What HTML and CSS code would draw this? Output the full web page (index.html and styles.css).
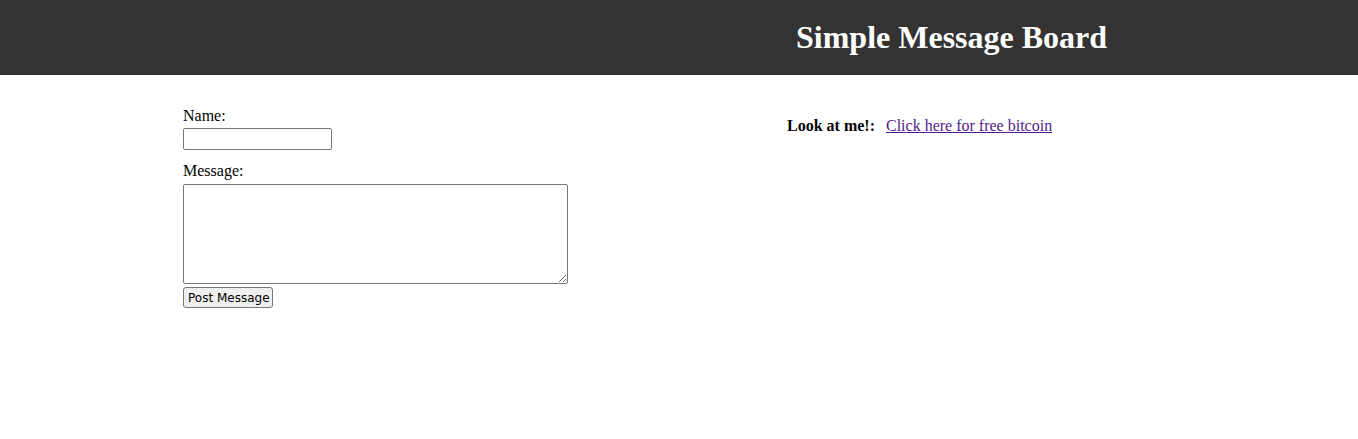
FILE: index.html
```html
<!DOCTYPE html>
<html>
<head>
<meta charset="utf-8">
<title>Simple Message Board</title>
<link rel="stylesheet" href="styles.css">
</head>
<body>
<header class="site-header">
  <h1 class="site-title">Simple Message Board</h1>
</header>
<main class="content">
  <form class="post-form">
    <label class="field-label" for="name">Name:</label>
    <input class="name-input" type="text" id="name">
    <label class="field-label message-label" for="message">Message:</label>
    <textarea class="message-input" id="message"></textarea>
    <button class="post-button" type="button">Post Message</button>
  </form>
  <aside class="promo">
    <strong class="promo-label">Look at me!:</strong>
    <a class="promo-link" href="#">Click here for free bitcoin</a>
  </aside>
</main>
</body>
</html>
```
FILE: styles.css
```css
html, body {
  margin: 0;
  padding: 0;
  background: #ffffff;
  font-family: "Liberation Serif", "Times New Roman", serif;
  font-size: 16px;
  color: #000;
}

.site-header {
  background: #333333;
  height: 75px;
  display: flex;
  align-items: center;
  padding-left: 796px;
  box-sizing: border-box;
}

.site-title {
  margin: 0;
  color: #ffffff;
  font-size: 32px;
  font-weight: bold;
  line-height: 37px;
}

.content {
  display: flex;
  padding: 32px 0 0 183px;
}

.post-form {
  width: 604px;
  display: flex;
  flex-direction: column;
  align-items: flex-start;
}

.field-label {
  display: block;
  line-height: 18px;
  margin-bottom: 3px;
}

.message-label {
  margin-top: 12px;
  margin-bottom: 4px;
}

.name-input {
  width: 149px;
  height: 22px;
  box-sizing: border-box;
  margin: 0;
  border: 1px solid #767676;
  border-radius: 2px;
  padding: 1px 2px;
  font-family: "Liberation Sans", Arial, sans-serif;
  font-size: 13.33px;
}

.message-input {
  width: 385px;
  height: 100px;
  box-sizing: border-box;
  margin: 0;
  border: 1px solid #767676;
  border-radius: 2px;
  padding: 2px;
  font-family: "Liberation Mono", monospace;
  font-size: 13.33px;
}

.post-button {
  margin-top: 3px;
  width: 90px;
  height: 21px;
  box-sizing: border-box;
  padding: 0 4px;
  background: #efefef;
  border: 1px solid #767676;
  border-radius: 3px;
  font-family: "DejaVu Sans", Tahoma, sans-serif;
  font-size: 12px;
  color: #000;
  white-space: nowrap;
}

.promo {
  padding-top: 10px;
  display: flex;
  align-items: baseline;
  gap: 11px;
  line-height: 18px;
}

.promo-label {
  font-weight: bold;
}

.promo-link {
  color: #551a8b;
  text-decoration: underline;
}
```
